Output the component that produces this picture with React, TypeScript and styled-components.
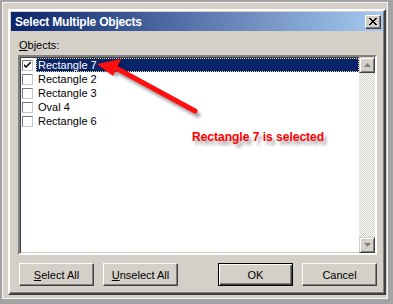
import React from "react";
import styled, { createGlobalStyle } from "styled-components";

const GlobalStyle = createGlobalStyle`
  html, body {
    margin: 0;
    padding: 0;
    background: #a3a3a3;
  }
  body {
    font-family: "Liberation Sans", Arial, sans-serif;
    font-size: 11px;
    color: #000;
  }
`;

const Screen = styled.div`
  position: relative;
  width: 393px;
  height: 304px;
  box-sizing: border-box;
  padding: 2px 5px 5px 2px;
  background: #a3a3a3;
  overflow: hidden;
`;

const Frame = styled.div`
  box-sizing: border-box;
  height: 100%;
  padding: 6px 1px 3px 5px;
  background: #d4d0c8;
  border: 1px solid #f4f4f4;
`;

const Dialog = styled.div`
  box-sizing: border-box;
  display: flex;
  flex-direction: column;
  height: 100%;
  padding: 1px;
  background: #d4d0c8;
  border-style: solid;
  border-width: 2px;
  border-color: #ffffff #404040 #404040 #ffffff;
  box-shadow: inset -1px -1px 0 #808080;
`;

const TitleBar = styled.div`
  display: flex;
  align-items: center;
  justify-content: space-between;
  height: 19px;
  padding: 0 2px 0 4px;
  background: linear-gradient(to right, #0a246a, #a6caf0);
`;

const Title = styled.span`
  color: #ffffff;
  font-weight: bold;
  font-size: 12px;
  letter-spacing: -0.2px;
`;

const CloseButton = styled.div`
  box-sizing: border-box;
  display: flex;
  align-items: center;
  justify-content: center;
  width: 16px;
  height: 14px;
  background: #d4d0c8;
  border-style: solid;
  border-width: 1px;
  border-color: #ffffff #404040 #404040 #ffffff;
  box-shadow: inset -1px -1px 0 #808080;
`;

const Body = styled.div`
  display: flex;
  flex-direction: column;
  flex: 1;
  padding: 8px 6px 6px 7px;
`;

const Label = styled.div`
  height: 13px;
  line-height: 13px;
  padding-left: 1px;
  margin-bottom: 3px;
`;

const ListBox = styled.div`
  box-sizing: border-box;
  display: flex;
  height: 200px;
  background: #ffffff;
  border-style: solid;
  border-width: 2px;
  border-color: #808080 #ffffff #ffffff #808080;
  box-shadow: inset 1px 1px 0 #404040, inset -1px -1px 0 #d4d0c8;
`;

const Rows = styled.div`
  flex: 1;
  padding: 1px 0 0 2px;
`;

const Row = styled.div`
  display: flex;
  align-items: center;
  height: 14px;
`;

const CheckBox = styled.div`
  box-sizing: border-box;
  display: flex;
  align-items: center;
  justify-content: center;
  width: 11px;
  height: 11px;
  margin-right: 3px;
  background: #ffffff;
  border-style: solid;
  border-width: 1px;
  border-color: #7a7a7a #c8c8c8 #c8c8c8 #7a7a7a;
`;

const ItemText = styled.div<{ $selected?: boolean }>`
  box-sizing: border-box;
  flex: 1;
  height: 14px;
  line-height: 12px;
  padding-left: 1px;
  color: ${(p) => (p.$selected ? "#ffffff" : "#000000")};
  background: ${(p) => (p.$selected ? "#0a246a" : "transparent")};
  border: 1px dotted ${(p) => (p.$selected ? "#e8d888" : "transparent")};
`;

const ScrollBar = styled.div`
  display: flex;
  flex-direction: column;
  width: 16px;
  background: repeating-conic-gradient(#ffffff 0 25%, #d4d0c8 0 50%) 0 0 / 2px 2px;
`;

const Track = styled.div`
  flex: 1;
`;

const ArrowButton = styled.div`
  box-sizing: border-box;
  display: flex;
  align-items: center;
  justify-content: center;
  width: 16px;
  height: 16px;
  background: #d4d0c8;
  border-style: solid;
  border-width: 1px;
  border-color: #d4d0c8 #404040 #404040 #d4d0c8;
  box-shadow: inset 1px 1px 0 #ffffff, inset -1px -1px 0 #808080;
`;

const ButtonRow = styled.div`
  display: flex;
  justify-content: space-between;
  margin-top: 8px;
  padding-left: 1px;
`;

const ButtonGroup = styled.div`
  display: flex;
  gap: 9px;
`;

const Button = styled.div<{ $default?: boolean }>`
  box-sizing: border-box;
  display: flex;
  align-items: center;
  justify-content: center;
  width: 75px;
  height: 23px;
  background: #d4d0c8;
  border: 1px solid ${(p) => (p.$default ? "#000000" : "transparent")};
  box-shadow: ${(p) =>
    p.$default
      ? "inset 1px 1px 0 #ffffff, inset -1px -1px 0 #404040, inset -2px -2px 0 #808080"
      : "inset 0 0 0 0 transparent"};
  ${(p) =>
    !p.$default &&
    `border-color: #ffffff #404040 #404040 #ffffff;
     box-shadow: inset -1px -1px 0 #808080;`}
`;

const Callout = styled.div`
  position: absolute;
  left: 192px;
  top: 130px;
  color: #ff0000;
  font-weight: bold;
  font-size: 12px;
  text-shadow: 3px 4px 3px rgba(0, 0, 0, 0.35);
`;

const ArrowLayer = styled.svg`
  position: absolute;
  left: 0;
  top: 0;
`;

const items = ["Rectangle 7", "Rectangle 2", "Rectangle 3", "Oval 4", "Rectangle 6"];

const App: React.FC = () => {
  return (
    <Screen>
      <GlobalStyle />
      <Frame>
        <Dialog>
          <TitleBar>
            <Title>Select Multiple Objects</Title>
            <CloseButton>
              <svg width="8" height="7" viewBox="0 0 8 7">
                <path d="M0 0h2v1h1v1h2v-1h1v-1h2v1h-1v1h-1v1h-1v1h1v1h1v1h1v1h-2v-1h-1v-1h-2v1h-1v1h-2v-1h1v-1h1v-1h1v-1h-1v-1h-1v-1h-1z" fill="#000" />
              </svg>
            </CloseButton>
          </TitleBar>
          <Body>
            <Label>
              <u>O</u>bjects:
            </Label>
            <ListBox>
              <Rows>
                {items.map((name, i) => (
                  <Row key={name}>
                    <CheckBox>
                      {i === 0 && (
                        <svg width="7" height="7" viewBox="0 0 7 7">
                          <path d="M0 2l2 2l5-5v2l-5 5l-2-2z" fill="#000" />
                        </svg>
                      )}
                    </CheckBox>
                    <ItemText $selected={i === 0}>{name}</ItemText>
                  </Row>
                ))}
              </Rows>
              <ScrollBar>
                <ArrowButton>
                  <svg width="7" height="4" viewBox="0 0 7 4">
                    <path d="M3.5 0L7 4H0z" fill="#808080" />
                  </svg>
                </ArrowButton>
                <Track />
                <ArrowButton>
                  <svg width="7" height="4" viewBox="0 0 7 4">
                    <path d="M0 0h7L3.5 4z" fill="#808080" />
                  </svg>
                </ArrowButton>
              </ScrollBar>
            </ListBox>
            <ButtonRow>
              <ButtonGroup>
                <Button>
                  <span>
                    <u>S</u>elect All
                  </span>
                </Button>
                <Button>
                  <span>
                    <u>U</u>nselect All
                  </span>
                </Button>
              </ButtonGroup>
              <ButtonGroup>
                <Button $default>OK</Button>
                <Button>Cancel</Button>
              </ButtonGroup>
            </ButtonRow>
          </Body>
        </Dialog>
      </Frame>
      <ArrowLayer width="393" height="304" viewBox="0 0 393 304">
        <defs>
          <filter id="shadow" x="-20%" y="-20%" width="140%" height="140%">
            <feGaussianBlur stdDeviation="1.6" />
          </filter>
        </defs>
        <g transform="translate(3 4)" fill="#000" opacity="0.35" filter="url(#shadow)">
          <polygon points="98,65 120,60 114,73" />
          <line x1="114" y1="67" x2="195" y2="111" stroke="#000" strokeWidth="5" strokeLinecap="round" />
        </g>
        <line x1="114" y1="67" x2="195" y2="111" stroke="#ff1010" strokeWidth="5" strokeLinecap="round" />
        <polygon points="97,64 121,59 113,76" fill="#ff1010" />
      </ArrowLayer>
      <Callout>Rectangle 7 is selected</Callout>
    </Screen>
  );
};

export default App;
